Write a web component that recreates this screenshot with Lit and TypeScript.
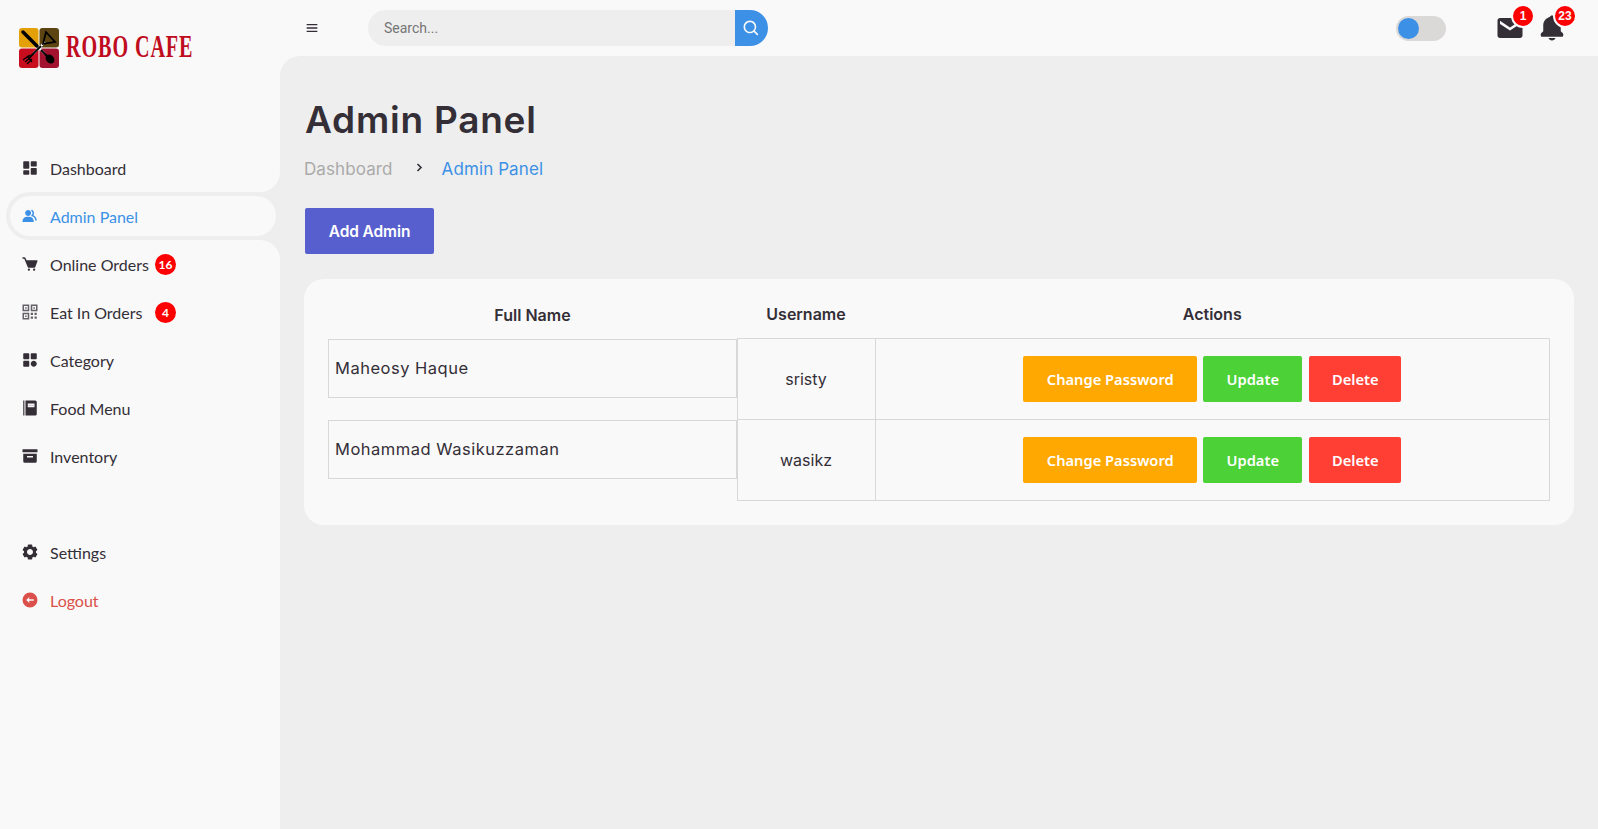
import { LitElement, html, css, svg } from "lit";
import { customElement } from "lit/decorators.js";

// boxicons-style glyphs, 24 unit box
const icons: Record<string, any> = {
  dashboard: svg`<path d="M4 13h6a1 1 0 0 0 1-1V4a1 1 0 0 0-1-1H4a1 1 0 0 0-1 1v8a1 1 0 0 0 1 1zm-1 7a1 1 0 0 0 1 1h6a1 1 0 0 0 1-1v-4a1 1 0 0 0-1-1H4a1 1 0 0 0-1 1v4zm10 0a1 1 0 0 0 1 1h6a1 1 0 0 0 1-1v-7a1 1 0 0 0-1-1h-6a1 1 0 0 0-1 1v7zm1-10h6a1 1 0 0 0 1-1V4a1 1 0 0 0-1-1h-6a1 1 0 0 0-1 1v5a1 1 0 0 0 1 1z"/>`,
  group: svg`<path d="M16.604 11.048a5.67 5.67 0 0 0 .751-3.44c-.179-1.784-1.175-3.361-2.803-4.44l-1.105 1.666c1.119.742 1.8 1.799 1.918 2.974a3.693 3.693 0 0 1-1.072 2.986l-1.192 1.192 1.618.475C18.951 13.701 19 17.957 19 18h2c0-1.789-.956-5.285-4.396-6.952z"/><path d="M9.5 12c2.206 0 4-1.794 4-4s-1.794-4-4-4-4 1.794-4 4 1.794 4 4 4zm1.5 1H8c-3.309 0-6 2.691-6 6v1h15v-1c0-3.309-2.691-6-6-6z"/>`,
  cart: svg`<path d="M21.822 7.431A1 1 0 0 0 21 7H7.333L6.179 4.23A1.994 1.994 0 0 0 4.333 3H2v2h2.333l4.744 11.385A1 1 0 0 0 10 17h8c.417 0 .79-.259.937-.648l3-8a1 1 0 0 0-.115-.921z"/><circle cx="10.5" cy="19.5" r="1.5"/><circle cx="17.5" cy="19.5" r="1.5"/>`,
  qr: svg`<g opacity=".75"><path d="M3 3h7v7H3zM14 3h7v7h-7zM3 14h7v7H3z" fill="none" stroke="currentColor" stroke-width="2"/><path d="M5.5 5.5h2v2h-2zM16.5 5.5h2v2h-2zM5.5 16.5h2v2h-2zM13 13h3v3h-3zM18 13h3v3h-3zM13 18h3v3h-3zM18 18h3v3h-3z"/></g>`,
  category: svg`<path d="M10 3H4a1 1 0 0 0-1 1v6a1 1 0 0 0 1 1h6a1 1 0 0 0 1-1V4a1 1 0 0 0-1-1zm10 0h-6a1 1 0 0 0-1 1v6a1 1 0 0 0 1 1h6a1 1 0 0 0 1-1V4a1 1 0 0 0-1-1zM10 13H4a1 1 0 0 0-1 1v6a1 1 0 0 0 1 1h6a1 1 0 0 0 1-1v-6a1 1 0 0 0-1-1zm7 0c-2.206 0-4 1.794-4 4s1.794 4 4 4 4-1.794 4-4-1.794-4-4-4z"/>`,
  book: svg`<path fill-rule="evenodd" d="M6 2h13a2 2 0 0 1 2 2v16a2 2 0 0 1-2 2H6zM9 6v5h9V6z"/><path d="M3 2h1.500v20H3z"/><path d="M9.500 7.800h8v1.500h-8z" fill="#cfcfd6"/>`,
  box: svg`<path d="M2 3h20v4H2z"/><path fill-rule="evenodd" d="M3 9h18v10a2 2 0 0 1-2 2H5a2 2 0 0 1-2-2zM8 12v2h8v-2z"/>`,
  cog: svg`<path d="m2.344 15.271 2 3.46a1 1 0 0 0 1.366.365l1.396-.806c.58.457 1.221.832 1.895 1.112V21a1 1 0 0 0 1 1h4a1 1 0 0 0 1-1v-1.598a8.094 8.094 0 0 0 1.895-1.112l1.396.806c.477.275 1.091.11 1.366-.365l2-3.46a1.004 1.004 0 0 0-.365-1.366l-1.372-.793a7.683 7.683 0 0 0-.002-2.224l1.372-.793c.476-.275.641-.89.365-1.366l-2-3.46a1 1 0 0 0-1.366-.365l-1.396.806A8.034 8.034 0 0 0 15 4.598V3a1 1 0 0 0-1-1h-4a1 1 0 0 0-1 1v1.598A8.094 8.094 0 0 0 7.105 5.71L5.71 4.904a.999.999 0 0 0-1.366.365l-2 3.46a1.004 1.004 0 0 0 .365 1.366l1.372.793a7.683 7.683 0 0 0 0 2.224l-1.372.793c-.476.275-.641.89-.365 1.366zM12 8c2.206 0 4 1.794 4 4s-1.794 4-4 4-4-1.794-4-4 1.794-4 4-4z"/>`,
  logout: svg`<path fill-rule="evenodd" d="M12 2a10 10 0 1 0 0 20 10 10 0 0 0 0-20zM11 8l-4 4 4 4v-3h6v-2h-6z"/>`,
  menu: svg`<path d="M4 6h16v2H4zm0 5h16v2H4zm0 5h16v2H4z"/>`,
  search: svg`<path d="M10 18a7.952 7.952 0 0 0 4.897-1.688l4.396 4.396 1.414-1.414-4.396-4.396A7.952 7.952 0 0 0 18 10c0-4.411-3.589-8-8-8s-8 3.589-8 8 3.589 8 8 8zm0-14c3.309 0 6 2.691 6 6s-2.691 6-6 6-6-2.691-6-6 2.691-6 6-6z"/>`,
  mail: svg`<path d="M20 4H4c-1.103 0-2 .897-2 2v12c0 1.103.897 2 2 2h16c1.103 0 2-.897 2-2V6c0-1.103-.897-2-2-2zm0 4.700-8 5.334L4 8.700V6.297l8 5.333 8-5.333V8.700z"/>`,
  bell: svg`<path d="M12 22c1.311 0 2.407-.834 2.818-2H9.182C9.593 21.166 10.689 22 12 22zm7-7.414V10c0-3.217-2.185-5.927-5.145-6.742C13.562 2.520 12.846 2 12 2s-1.562.520-1.855 1.258C7.185 4.074 5 6.783 5 10v4.586l-1.707 1.707A.996.996 0 0 0 3 17v1a1 1 0 0 0 1 1h16a1 1 0 0 0 1-1v-1a.996.996 0 0 0-.293-.707L19 14.586z"/>`,
};

function icon(name: string) {
  return html`<svg class="ico" viewBox="0 0 24 24" fill="currentColor">${icons[name]}</svg>`;
}

const mainMenu = [
  { label: "Dashboard", icon: "dashboard" },
  { label: "Admin Panel", icon: "group", active: true },
  { label: "Online Orders", icon: "cart", badge: "16" },
  { label: "Eat In Orders", icon: "qr", badge: "4" },
  { label: "Category", icon: "category" },
  { label: "Food Menu", icon: "book" },
  { label: "Inventory", icon: "box" },
];

const admins = [
  { name: "Maheosy Haque", username: "sristy" },
  { name: "Mohammad Wasikuzzaman", username: "wasikz" },
];

@customElement("app-root")
export class AppRoot extends LitElement {
  static styles = css`
    :host {
      display: grid;
      grid-template-columns: 280px 1fr;
      min-height: 829px;
      background: #f9f9f9;
      color: #342e37;
      font-family: "Lato", sans-serif;
    }
    .ico {
      display: block;
      width: 18px;
      height: 18px;
      flex: none;
    }

    /* sidebar */
    aside {
      position: relative;
      z-index: 0;
      background: #f9f9f9;
      overflow: hidden;
    }
    .brand {
      height: 96px;
      display: flex;
      align-items: center;
      gap: 7px;
      padding-left: 19px;
      box-sizing: border-box;
    }
    .logo {
      width: 40px;
      height: 40px;
      display: block;
      flex: none;
    }
    .brand-name {
      font-family: "Liberation Serif", serif;
      font-weight: 700;
      font-size: 31px;
      line-height: 31px;
      margin-top: -3px;
      letter-spacing: 1.4px;
      color: #c00d1e;
      white-space: nowrap;
      transform: scaleX(0.65);
      transform-origin: left center;
    }
    ul {
      list-style: none;
      margin: 48px 0 0;
      padding: 0;
    }
    li {
      height: 48px;
      margin-left: 6px;
      padding: 4px;
      box-sizing: border-box;
      position: relative;
    }
    li.active {
      background: #eee;
      border-radius: 48px 0 0 48px;
    }
    li.active::before,
    li.active::after {
      content: "";
      position: absolute;
      right: 0;
      width: 40px;
      height: 40px;
      border-radius: 50%;
      z-index: -1;
    }
    li.active::before {
      top: -40px;
      box-shadow: 20px 20px 0 #eee;
    }
    li.active::after {
      bottom: -40px;
      box-shadow: 20px -20px 0 #eee;
    }
    li a {
      height: 100%;
      display: flex;
      align-items: center;
      border-radius: 48px;
      background: #f9f9f9;
      font-size: 16px;
      color: #342e37;
    }
    li.active a {
      color: #3c91e6;
    }
    li.logout a {
      color: #db504a;
    }
    li .ico {
      margin: -1px 11px 0 11px;
    }
    .label {
      min-width: 105px;
    }
    .count {
      width: 21px;
      height: 21px;
      border-radius: 50%;
      background: #ff0000;
      color: #fff;
      font-size: 12px;
      font-weight: 700;
      display: grid;
      place-items: center;
    }

    /* top bar */
    .main {
      min-width: 0;
      display: flex;
      flex-direction: column;
    }
    nav {
      height: 56px;
      flex: none;
      display: flex;
      align-items: center;
      padding: 0 31px 0 24px;
    }
    nav .menu {
      margin-right: 48px;
    }
    nav .menu .ico {
      width: 16px;
      height: 16px;
    }
    .search {
      width: 400px;
      height: 36px;
      display: flex;
      margin-right: auto;
    }
    .search span {
      flex: 1;
      background: #eee;
      border-radius: 36px 0 0 36px;
      padding-left: 16px;
      font: 14px/36px "Roboto", sans-serif;
      color: #757575;
    }
    .search button {
      width: 33px;
      border: none;
      padding: 0;
      background: #3c91e6;
      color: #f9f9f9;
      border-radius: 0 36px 36px 0;
      display: grid;
      place-items: center;
    }
    .search button .ico {
      width: 19px;
      height: 19px;
    }
    .toggle {
      width: 50px;
      height: 25px;
      border-radius: 25px;
      background: #dbd8d8;
      padding: 2px;
      box-sizing: border-box;
      margin-right: 49px;
    }
    .toggle i {
      display: block;
      width: 21px;
      height: 21px;
      border-radius: 50%;
      background: #3c91e6;
    }
    .notify {
      position: relative;
      display: block;
    }
    .notify + .notify {
      margin-left: 12px;
    }
    .notify .ico {
      width: 30px;
      height: 30px;
    }
    .notify b {
      position: absolute;
      top: -9px;
      right: -10px;
      width: 20px;
      height: 20px;
      border: 2px solid #f9f9f9;
      border-radius: 50%;
      background: #ff0000;
      color: #f9f9f9;
      font: 700 12px/20px "Liberation Sans", sans-serif;
      text-align: center;
    }

    /* content */
    .content {
      flex: 1;
      background: #eee;
      border-radius: 20px 0 0 0;
      padding: 36px 24px;
    }
    h1 {
      margin: 1px 0 -1px;
      padding-left: 1px;
      font: 600 37px/54px "Inter", sans-serif;
      letter-spacing: 0.75px;
      color: #342e37;
    }
    .crumbs {
      display: flex;
      align-items: center;
      height: 24px;
      margin-top: 11px;
      font: 400 17px/24px "Inter", sans-serif;
      letter-spacing: 0.1px;
      color: #aaaaaa;
    }
    .crumbs svg {
      width: 7px;
      height: 9px;
      margin: -4px 19px 0 23px;
      color: #342e37;
    }
    .crumbs em {
      font-style: normal;
      color: #3c91e6;
    }
    .add {
      display: block;
      margin: 27px 0 25px 1px;
      width: 129px;
      height: 46px;
      border: none;
      border-radius: 2px;
      background: #575fcf;
      color: #fff;
      font: 600 15.5px "Inter", sans-serif;
      letter-spacing: -0.1px;
      padding: 0;
    }
    .card {
      background: #f9f9f9;
      border-radius: 20px;
      padding: 24px;
    }
    table {
      width: 100%;
      table-layout: fixed;
      border-collapse: collapse;
      font: 400 16px "Inter", sans-serif;
    }
    th {
      height: 35px;
      padding: 0 0 12px;
      font-weight: 600;
      font-size: 16px;
      box-sizing: border-box;
      color: #342e37;
    }
    td {
      height: 81px;
      padding: 0;
      border: 1px solid #d9d7d7;
      text-align: center;
      box-sizing: border-box;
    }
    td.name {
      border: none;
      vertical-align: top;
      text-align: left;
    }
    .name-box {
      height: 59px;
      margin-top: 1px;
      box-sizing: border-box;
      border: 1px solid #d9d7d7;
      padding: 0 6px 1px;
      display: flex;
      align-items: center;
      font-size: 16.5px;
      letter-spacing: 0.5px;
    }
    .actions {
      display: flex;
      justify-content: center;
      gap: 6px;
    }
    .btn {
      height: 46px;
      border: none;
      border-radius: 2px;
      color: #fff;
      padding: 0;
      font: 600 14.7px "Noto Sans", sans-serif;
    }
    .pw {
      width: 174px;
      background: #ffa801;
    }
    .up {
      width: 99px;
      margin-right: 1px;
      background: #4cd137;
    }
    .del {
      width: 92px;
      background: #ff3f34;
    }
  `;

  private logo() {
    return html`<svg class="logo" viewBox="0 0 40 40">
      <rect x="0" y="0" width="19.500" height="19.500" rx="3" fill="#e3a008" />
      <rect x="20.500" y="0" width="19.500" height="19.500" rx="3" fill="#5c4513" />
      <rect x="0" y="20.500" width="19.500" height="19.500" rx="3" fill="#c80d1f" />
      <rect x="20.500" y="20.500" width="19.500" height="19.500" rx="3" fill="#a3122f" />
      <path d="M14 14l12 12M26 14L14 26" stroke="#fff" stroke-width="2" />
      <path d="M4 4l14 14" stroke="#000" stroke-width="3.500" stroke-linecap="round" />
      <path d="M24 16L27 4l9 10z" fill="none" stroke="#000" stroke-width="1.800" />
      <path d="M22 18L10 30" stroke="#000" stroke-width="1.800" />
      <path d="M11 27l-7 5M12 29l-6 5M13 31l-5 5M8 28l5 6" stroke="#000" stroke-width="1.300" />
      <path d="M22 22l7 7" stroke="#000" stroke-width="1.800" />
      <ellipse cx="31" cy="31" rx="3.800" ry="5" transform="rotate(-45 31 31)" fill="#000" />
    </svg>`;
  }

  private menuItem(item: { label: string; icon: string; active?: boolean; badge?: string }, extra = "") {
    return html`<li class="${item.active ? "active" : ""} ${extra}">
      <a>
        ${icon(item.icon)}
        <span class="label">${item.label}</span>
        ${item.badge ? html`<span class="count">${item.badge}</span>` : ""}
      </a>
    </li>`;
  }

  render() {
    return html`
      <aside>
        <div class="brand">
          ${this.logo()}
          <span class="brand-name">ROBO CAFE</span>
        </div>
        <ul>${mainMenu.map((m) => this.menuItem(m))}</ul>
        <ul>
          ${this.menuItem({ label: "Settings", icon: "cog" })}
          ${this.menuItem({ label: "Logout", icon: "logout" }, "logout")}
        </ul>
      </aside>
      <div class="main">
        <nav>
          <span class="menu">${icon("menu")}</span>
          <div class="search">
            <span>Search...</span>
            <button>${icon("search")}</button>
          </div>
          <div class="toggle"><i></i></div>
          <a class="notify">${icon("mail")}<b>1</b></a>
          <a class="notify">${icon("bell")}<b>23</b></a>
        </nav>
        <section class="content">
          <h1>Admin Panel</h1>
          <div class="crumbs">
            <span>Dashboard</span>
            <svg viewBox="0 0 7 9" fill="none" stroke="currentColor" stroke-width="1.600"><path d="M1.500 1l3.500 3.500L1.500 8" /></svg>
            <em>Admin Panel</em>
          </div>
          <button class="add">Add Admin</button>
          <div class="card">
            <table>
              <colgroup>
                <col style="width: 409px" />
                <col style="width: 138px" />
                <col />
              </colgroup>
              <thead>
                <tr><th>Full Name</th><th>Username</th><th>Actions</th></tr>
              </thead>
              <tbody>
                ${admins.map(
                  (a) => html`<tr>
                    <td class="name"><div class="name-box">${a.name}</div></td>
                    <td>${a.username}</td>
                    <td>
                      <div class="actions">
                        <button class="btn pw">Change Password</button>
                        <button class="btn up">Update</button>
                        <button class="btn del">Delete</button>
                      </div>
                    </td>
                  </tr>`
                )}
              </tbody>
            </table>
          </div>
        </section>
      </div>
    `;
  }
}
